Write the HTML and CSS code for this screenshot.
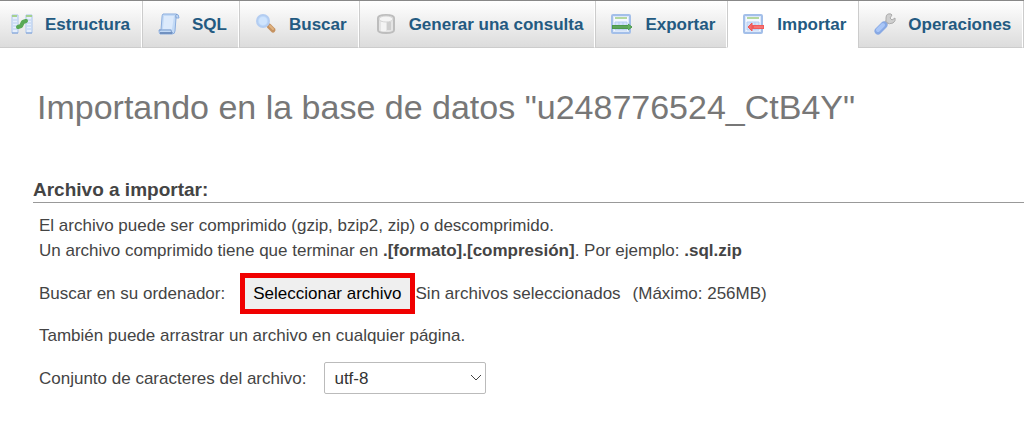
FILE: index.html
```html
<!DOCTYPE html>
<html lang="es">
<head>
    <meta charset="UTF-8">
    <meta name="viewport" content="width=device-width, initial-scale=1">
    <title>Importar</title>
    <link rel="stylesheet" href="styles.css">
</head>
<body>
    <nav class="topmenu">
        <a class="tab tab-first" href="#estructura">
            <svg class="icon" viewBox="0 0 22 22">
                <path d="M1 2h6v18H1z" fill="#e6effb" stroke="#a9c4ec"/>
                <path d="M15 2h6v18h-6z" fill="#e6effb" stroke="#a9c4ec"/>
                <path d="M1 3h5M15 3h6" stroke="#a5d18f" stroke-width="2"/>
                <path d="M2 7h4M2 10h4M2 13h4M2 16h4M16 7h4M16 10h4M16 13h4M16 16h4" stroke="#b7cdf0"/>
                <path d="M1 20h6M15 20h6" stroke="#7fa0d4"/>
                <path d="M7 14L10 13L12 9L15 8" fill="none" stroke="#58a955" stroke-width="4" stroke-linecap="round" stroke-linejoin="round"/>
            </svg>
            Estructura
        </a>
        <a class="tab" href="#sql">
            <svg class="icon" viewBox="0 0 22 22">
                <path d="M5 1h13q3 0 3 4h-3l-1 13q0 3-3 3H2q-1-1-1-4h2L4 4q0-2 1-3z" fill="#c3daf6" stroke="#8badde"/>
                <path d="M6 3h10l-2 13H5z" fill="#dceafc"/>
                <path d="M18 5q-1-3 1-4M1 17h12q0 3 2 3" fill="none" stroke="#7c9dcc"/>
                <path d="M2 20h12" stroke="#7191c0" stroke-width="2"/>
            </svg>
            SQL
        </a>
        <a class="tab" href="#buscar">
            <svg class="icon" viewBox="0 0 22 22">
                <path d="M14 13l4 4" stroke="#c59260" stroke-width="5" stroke-linecap="round"/>
                <path d="M15 13l3 3" stroke="#e0b27e" stroke-width="2" stroke-linecap="round"/>
                <circle cx="8" cy="8" r="6" fill="#bfdafa" stroke="#b4cdf1" stroke-width="2"/>
                <circle cx="8" cy="8" r="4" fill="#cfe4fd"/>
            </svg>
            Buscar
        </a>
        <a class="tab" href="#consulta">
            <svg class="icon" viewBox="0 0 22 22">
                <path d="M3 5q0-3 8-3t8 3v12q0 3-8 3t-8-3z" fill="#e4e4e4" stroke="#bdbdbd" stroke-width="2"/>
                <path d="M6 9h5v9H6z" fill="#f4f4f4"/>
                <path d="M12 9h4v8h-4z" fill="#cecece"/>
                <ellipse cx="11" cy="6" rx="7" ry="3" fill="#f5f5f5" stroke="#d6d6d6"/>
            </svg>
            Generar una consulta
        </a>
        <a class="tab" href="#exportar">
            <svg class="icon" viewBox="0 0 22 22">
                <rect x="1" y="2" width="18" height="18" rx="1" fill="#dce8fa" stroke="#a3bfe9" stroke-width="2"/>
                <path d="M3 4h14v14H3z" fill="#f5f9ff"/>
                <path d="M4 5h12" stroke="#b4d79f" stroke-width="2"/>
                <path d="M4 9h12v8H4zM8 9v8M12 9v8" fill="#d2e2fb" stroke="#b5cdf2"/>
                <path d="M1 14h17" stroke="#4c994c" stroke-width="4"/>
                <path d="M2 14h16" stroke="#6db26a"/>
                <path d="M17 11l4 3-4 3" fill="#62b25f" stroke="#4c994c"/>
            </svg>
            Exportar
        </a>
        <a class="tab tab-active" href="#importar">
            <svg class="icon" viewBox="0 0 22 22">
                <rect x="1" y="2" width="18" height="18" rx="1" fill="#dce8fa" stroke="#a3bfe9" stroke-width="2"/>
                <path d="M3 4h14v14H3z" fill="#f5f9ff"/>
                <path d="M4 5h12" stroke="#b4d79f" stroke-width="2"/>
                <path d="M4 9h12v8H4zM8 9v8M12 9v8" fill="#d2e2fb" stroke="#b5cdf2"/>
                <path d="M8 14h13" stroke="#f05c5c" stroke-width="4"/>
                <path d="M9 10l-4 4 4 4z" fill="#f46a6a" stroke="#ee5656"/>
                <path d="M11 14h9" stroke="#f88b8b"/>
            </svg>
            Importar
        </a>
        <a class="tab" href="#operaciones">
            <svg class="icon" viewBox="0 0 22 22">
                <path d="M10 12l4-4" stroke="#b8b8b8" stroke-width="4"/>
                <path d="M17 1q-5-1-5 4v4q3 3 7 1 3-2 2-5l-3 2-2-2 2-3z" fill="#cfcfcf" stroke="#acacac"/>
                <path d="M4 18l6-6" stroke="#88a9e4" stroke-width="7" stroke-linecap="round"/>
                <path d="M4 17l5-5" stroke="#a9c6f7" stroke-width="4" stroke-linecap="round"/>
            </svg>
            Operaciones
        </a>
        <span class="tab-rest"></span>
    </nav>

    <main class="page">
        <h1>Importando en la base de datos "u248776524_CtB4Y"</h1>

        <form class="import-form">
            <h2>Archivo a importar:</h2>
            <div class="form-body">
                <p>
                    El archivo puede ser comprimido (gzip, bzip2, zip) o descomprimido.<br>
                    Un archivo comprimido tiene que terminar en <b>.[formato].[compresión]</b>. Por ejemplo: <b>.sql.zip</b>
                </p>
                <div class="file-row">
                    <label for="selectFile">Buscar en su ordenador:</label>
                    <button type="button" class="file-button" id="selectFile">Seleccionar archivo</button>
                    <span class="file-name">Sin archivos seleccionados</span>
                    <span>(Máximo: 256MB)</span>
                </div>
                <p>También puede arrastrar un archivo en cualquier página.</p>
                <div class="charset-row">
                    <label for="charset">Conjunto de caracteres del archivo:</label>
                    <div class="select-wrap">
                        <select id="charset">
                            <option>utf-8</option>
                        </select>
                        <svg class="chevron" viewBox="0 0 12 8"><path d="M1 1l5 5 5-5" fill="none" stroke="#444"/></svg>
                    </div>
                </div>
            </div>
        </form>
    </main>
</body>
</html>
```
FILE: styles.css
```css
body {
    margin: 0;
    background: #fff;
    color: #444;
    font-family: "Liberation Sans", Arial, Helvetica, sans-serif;
    font-size: 17px;
    line-height: 25px;
}

/* Tabs */
.topmenu {
    display: flex;
    border-top: 1px solid #888;
    overflow: hidden;
}

.tab {
    display: flex;
    flex: none;
    align-items: center;
    gap: 12px;
    box-sizing: border-box;
    height: 47px;
    padding: 0 11px 0 15px;
    border-right: 1px solid #fff;
    border-left: 1px solid #ccc;
    border-bottom: 1px solid #ccc;
    background: linear-gradient(#fff, #dcdcdc);
    color: #235a81;
    font-weight: bold;
    text-decoration: none;
    white-space: nowrap;
}

.tab-first {
    padding-left: 11px;
    border-left: 0;
}

.tab-active {
    border-color: #fff;
    border-left-color: #ccc;
    background: #fff;
}

.tab-rest {
    flex: 1;
    border-left: 1px solid #ccc;
    border-bottom: 1px solid #ccc;
    background: linear-gradient(#fff, #dcdcdc);
}

.icon {
    width: 22px;
    height: 22px;
}

/* Content */
.page {
    padding: 36px 0 28px 33px;
}

h1 {
    margin: 0 4px 48px;
    color: #777;
    font-size: 34px;
    font-weight: normal;
    line-height: 46px;
}

h2 {
    margin: 0;
    border-bottom: 1px solid #999;
    font-size: 19px;
    line-height: 24px;
}

.form-body {
    padding: 10px 6px 0;
}

p {
    margin: 0;
}

.file-row {
    display: flex;
    align-items: center;
    margin: 10px 0 9px;
}

.file-button {
    height: 41px;
    margin: 0 1px 0 15px;
    padding: 0 8px;
    border: 5px solid #f00000;
    background: #efefef;
    color: #000;
    font: inherit;
}

.file-name {
    margin-right: 12px;
}

.charset-row {
    display: flex;
    align-items: center;
    gap: 18px;
    margin-top: 14px;
}

.select-wrap {
    position: relative;
}

select {
    display: block;
    width: 162px;
    height: 32px;
    padding: 0 9px;
    border: 1px solid #bbb;
    border-radius: 2px;
    appearance: none;
    background: #fff;
    color: #333;
    font: inherit;
}

.chevron {
    position: absolute;
    top: 12px;
    right: 4px;
    width: 12px;
    height: 8px;
    pointer-events: none;
}
```
